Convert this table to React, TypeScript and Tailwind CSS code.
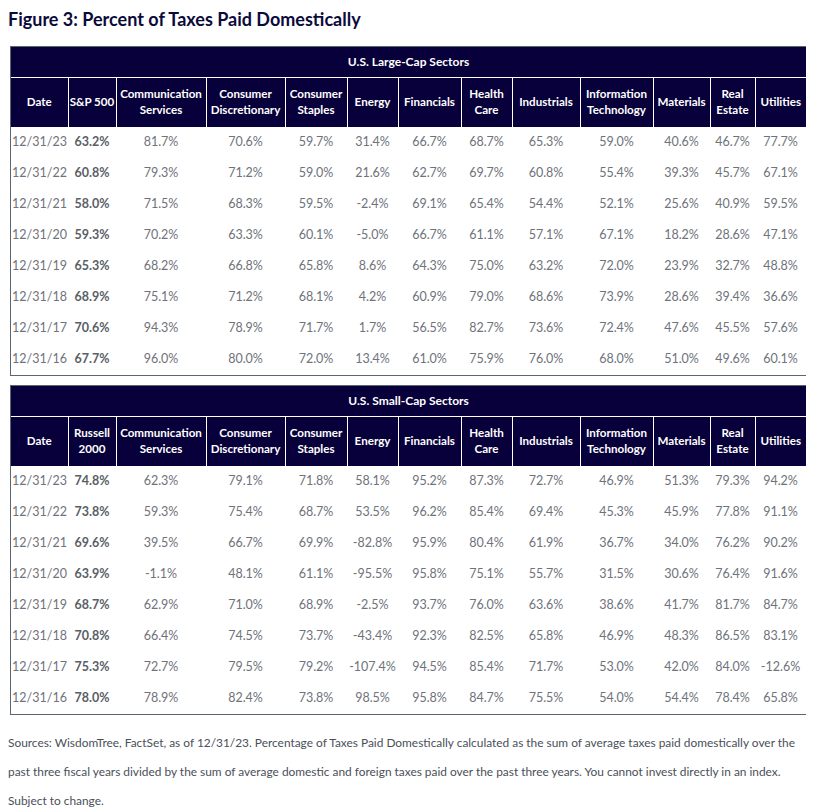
type Row = [string, string, ...string[]]

const largeCap: Row[] = [
    ['12/31/23', '63.2%', '81.7%', '70.6%', '59.7%', '31.4%', '66.7%', '68.7%', '65.3%', '59.0%', '40.6%', '46.7%', '77.7%'],
    ['12/31/22', '60.8%', '79.3%', '71.2%', '59.0%', '21.6%', '62.7%', '69.7%', '60.8%', '55.4%', '39.3%', '45.7%', '67.1%'],
    ['12/31/21', '58.0%', '71.5%', '68.3%', '59.5%', '-2.4%', '69.1%', '65.4%', '54.4%', '52.1%', '25.6%', '40.9%', '59.5%'],
    ['12/31/20', '59.3%', '70.2%', '63.3%', '60.1%', '-5.0%', '66.7%', '61.1%', '57.1%', '67.1%', '18.2%', '28.6%', '47.1%'],
    ['12/31/19', '65.3%', '68.2%', '66.8%', '65.8%', '8.6%', '64.3%', '75.0%', '63.2%', '72.0%', '23.9%', '32.7%', '48.8%'],
    ['12/31/18', '68.9%', '75.1%', '71.2%', '68.1%', '4.2%', '60.9%', '79.0%', '68.6%', '73.9%', '28.6%', '39.4%', '36.6%'],
    ['12/31/17', '70.6%', '94.3%', '78.9%', '71.7%', '1.7%', '56.5%', '82.7%', '73.6%', '72.4%', '47.6%', '45.5%', '57.6%'],
    ['12/31/16', '67.7%', '96.0%', '80.0%', '72.0%', '13.4%', '61.0%', '75.9%', '76.0%', '68.0%', '51.0%', '49.6%', '60.1%'],
]

const smallCap: Row[] = [
    ['12/31/23', '74.8%', '62.3%', '79.1%', '71.8%', '58.1%', '95.2%', '87.3%', '72.7%', '46.9%', '51.3%', '79.3%', '94.2%'],
    ['12/31/22', '73.8%', '59.3%', '75.4%', '68.7%', '53.5%', '96.2%', '85.4%', '69.4%', '45.3%', '45.9%', '77.8%', '91.1%'],
    ['12/31/21', '69.6%', '39.5%', '66.7%', '69.9%', '-82.8%', '95.9%', '80.4%', '61.9%', '36.7%', '34.0%', '76.2%', '90.2%'],
    ['12/31/20', '63.9%', '-1.1%', '48.1%', '61.1%', '-95.5%', '95.8%', '75.1%', '55.7%', '31.5%', '30.6%', '76.4%', '91.6%'],
    ['12/31/19', '68.7%', '62.9%', '71.0%', '68.9%', '-2.5%', '93.7%', '76.0%', '63.6%', '38.6%', '41.7%', '81.7%', '84.7%'],
    ['12/31/18', '70.8%', '66.4%', '74.5%', '73.7%', '-43.4%', '92.3%', '82.5%', '65.8%', '46.9%', '48.3%', '86.5%', '83.1%'],
    ['12/31/17', '75.3%', '72.7%', '79.5%', '79.2%', '-107.4%', '94.5%', '85.4%', '71.7%', '53.0%', '42.0%', '84.0%', '-12.6%'],
    ['12/31/16', '78.0%', '78.9%', '82.4%', '73.8%', '98.5%', '95.8%', '84.7%', '75.5%', '54.0%', '54.4%', '78.4%', '65.8%'],
]

const widths = [57, 48, 90, 79, 62, 51, 63, 51, 68, 73, 57, 45, 51]

const sectors: [string, string?][] = [
    ['Communication', 'Services'],
    ['Consumer', 'Discretionary'],
    ['Consumer', 'Staples'],
    ['Energy'],
    ['Financials'],
    ['Health', 'Care'],
    ['Industrials'],
    ['Information', 'Technology'],
    ['Materials'],
    ['Real', 'Estate'],
    ['Utilities'],
]

const SectorTable = ({ title, index, rows }: { title: string; index: [string, string?]; rows: Row[] }) => {
    const headers: [string, string?][] = [['Date'], index, ...sectors]
    return (
        <div className="border border-[#5b6670]">
            <table className="table-fixed border-collapse w-full">
                <colgroup>
                    {widths.map((w, i) => (
                        <col key={i} style={{ width: w }} />
                    ))}
                </colgroup>
                <thead>
                    <tr className="bg-[#07003a] h-[30px]">
                        <th colSpan={13} className="text-white text-[12px] font-bold text-center border-b border-white">
                            {title}
                        </th>
                    </tr>
                    <tr className="bg-[#07003a] h-[50px]">
                        {headers.map(([a, b], i) => (
                            <th
                                key={i}
                                className="text-white text-[11.6px] font-bold leading-[16px] text-center border-l border-white first:border-l-0 px-0 whitespace-nowrap"
                            >
                                {a}
                                {b && <br />}
                                {b}
                            </th>
                        ))}
                    </tr>
                </thead>
                <tbody>
                    {rows.map((r) => (
                        <tr key={r[0]} className="h-[31px] bg-white">
                            {r.map((v, i) => (
                                <td
                                    key={i}
                                    className={
                                        i === 1
                                            ? 'text-center text-[12.5px] font-bold text-[#5a5e66]'
                                            : 'text-center text-[12.5px] text-[#6e727a]'
                                    }
                                >
                                    {v}
                                </td>
                            ))}
                        </tr>
                    ))}
                </tbody>
            </table>
        </div>
    )
}

export default function App() {
    return (
        <div className="w-[817px] h-[812px] bg-white px-[8px] pt-[6px] font-['Lato',sans-serif]">
            <h1 className="text-[#0b0b3b] text-[18px] font-bold leading-[26px]">
                Figure 3: Percent of Taxes Paid Domestically
            </h1>
            <div className="ml-[2px] w-[796px] mt-[14px] flex flex-col gap-[9px]">
                <SectorTable title="U.S. Large-Cap Sectors" index={['S&P 500']} rows={largeCap} />
                <SectorTable title="U.S. Small-Cap Sectors" index={['Russell', '2000']} rows={smallCap} />
            </div>
            <p className="mt-[13px] text-[11.9px] leading-[29px] text-[#4a4f5a]">
                Sources: WisdomTree, FactSet, as of 12/31/23. Percentage of Taxes Paid Domestically calculated as the sum of
                average taxes paid domestically over the past three fiscal years divided by the sum of average domestic and
                foreign taxes paid over the past three years. You cannot invest directly in an index. Subject to change.
            </p>
        </div>
    )
}
